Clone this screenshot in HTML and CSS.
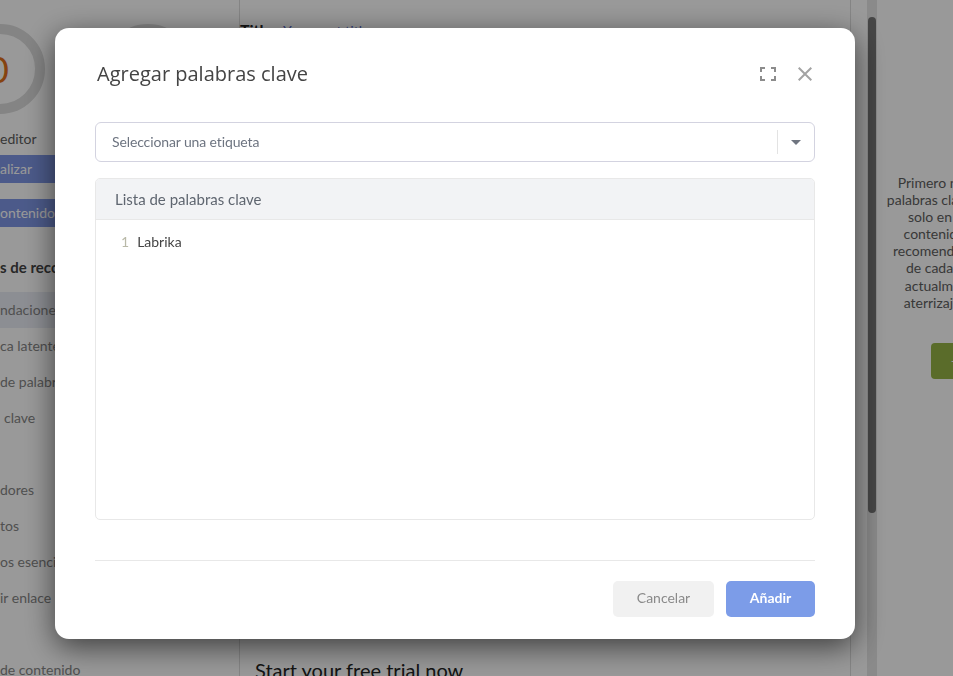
FILE: index.html
```html
<!DOCTYPE html>
<html lang="es">
<head>
<meta charset="utf-8">
<title>Agregar palabras clave</title>
<link rel="stylesheet" href="styles.css">
</head>
<body>
<div class="page">
  <aside class="sidebar">
    <div class="scores">
      <div class="ring"><span class="ring-value">0</span></div>
      <div class="ring"></div>
    </div>
    <div class="editor-link">editor</div>
    <div class="side-btn">alizar</div>
    <div class="side-btn side-btn-second">ontenido d</div>
    <div class="side-heading">s de reco</div>
    <div class="side-item side-item-active">ndaciones</div>
    <div class="side-item">ca latente</div>
    <div class="side-item">de palabr</div>
    <div class="side-item side-item-inset">clave</div>
    <div class="side-item side-gap">dores</div>
    <div class="side-item">tos</div>
    <div class="side-item">os esenci</div>
    <div class="side-item">ir enlace</div>
    <div class="side-item side-gap">de contenido</div>
  </aside>
  <main class="main">
    <div class="title-row"><b class="title-label">Title</b><span class="title-value">Your next title</span></div>
    <h2 class="trial">Start your free trial now</h2>
  </main>
  <div class="scrollbar"><div class="thumb"></div></div>
  <aside class="promo">
    <p class="promo-text">Primero necesitas<br>palabras clave para el<br>solo en el sitio<br>contenido de tu<br>recomendaciones y<br>de cada una de<br>actualmente en<br>aterrizaje web y</p>
    <div class="promo-btn">+ Añadir</div>
  </aside>
</div>
<div class="overlay">
  <section class="modal">
    <header class="modal-head">
      <h1 class="modal-title">Agregar palabras clave</h1>
      <div class="modal-icons">
        <svg class="icon" width="16" height="14" viewBox="0 0 16 14" fill="none" stroke="#8c8c8c" stroke-width="2"><path d="M1 5V1h4M11 1h4v4M15 9v4h-4M5 13H1V9"/></svg>
        <svg class="icon" width="14" height="14" viewBox="0 0 14 14" fill="none" stroke="#a3a3a3" stroke-width="2"><path d="M0.7 0.7l12.6 12.6M13.3 0.7L0.7 13.3"/></svg>
      </div>
    </header>
    <div class="select">
      <span class="select-label">Seleccionar una etiqueta</span>
      <span class="select-sep"></span>
      <span class="select-arrow"></span>
    </div>
    <div class="panel">
      <div class="panel-head">Lista de palabras clave</div>
      <div class="panel-body"><span class="line-no">1</span><span class="line-text">Labrika</span></div>
    </div>
    <footer class="modal-foot">
      <button class="btn btn-cancel">Cancelar</button>
      <button class="btn btn-add">Añadir</button>
    </footer>
  </section>
</div>
</body>
</html>
```
FILE: styles.css
```css
* { box-sizing: border-box; }
html, body { margin: 0; height: 100%; overflow: hidden; }
body { font-family: "Lato", "Liberation Sans", sans-serif; font-size: 14px; color: #333; background: #fff; }

.page { display: flex; width: 1120px; height: 676px; }

.sidebar { width: 240px; flex: none; padding-top: 24px; border-right: 1px solid #ddd; }
.scores { display: flex; gap: 58px; margin-left: -45px; height: 90px; }
.ring { width: 90px; height: 90px; border: 10px solid #dcdcdc; border-radius: 50%; display: flex; align-items: center; justify-content: center; flex: none; }
.ring-value { font-size: 36px; color: #e0701c; margin-right: 3px; }
.editor-link { margin-top: 16px; height: 25px; line-height: 17px; color: #5c5c5c; }
.side-btn { height: 28px; line-height: 27px; background: #7f97e6; color: #fff; white-space: nowrap; overflow: hidden; }
.side-btn-second { margin-top: 16px; }
.side-heading { margin-top: 30px; font-weight: 700; font-size: 15px; height: 20px; line-height: 20px; color: #444; white-space: nowrap; }
.side-item { height: 36px; line-height: 35px; white-space: nowrap; color: #858585; }
.side-item-active { margin-top: 15px; background: #eaedf5; }
.side-item-inset { padding-left: 4px; }
.side-gap { margin-top: 36px; }

.main { width: 611px; flex: none; border-right: 1px solid #ddd; display: flex; flex-direction: column; justify-content: space-between; }
.title-row { padding-top: 20px; display: flex; align-items: baseline; gap: 11px; font-size: 16px; }
.title-label { color: #222; }
.title-value { color: #5266c8; font-size: 14px; }
.trial { margin: 0 0 -6px 15px; font-weight: 400; font-size: 20px; line-height: 24px; color: #222; }

.scrollbar { width: 10px; flex: none; margin-left: 16px; background: #e6e6e6; padding: 17px 1px 0; }
.thumb { height: 496px; border-radius: 4px; background: #757575; }

.promo { width: 150px; flex: none; padding-top: 174px; text-align: center; }
.promo-text { margin: 0; line-height: 17.1px; color: #5e5e5e; white-space: nowrap; }
.promo-btn { margin: 32px 0 0 54px; width: 120px; height: 36px; line-height: 35px; padding-left: 20px; white-space: nowrap; text-align: left; background: #96b546; border-radius: 4px; color: #fff; }

.overlay { position: fixed; inset: 0; background: rgba(0, 0, 0, .4); padding: 28px 0 0 55px; }
.modal { width: 800px; height: 611px; background: #fff; border-radius: 14px; padding: 0 40px; box-shadow: 0 8px 30px rgba(0, 0, 0, .6); display: flex; flex-direction: column; }

.modal-head { height: 94px; display: flex; align-items: center; justify-content: space-between; padding: 0 3px 0 2px; }
.modal-title { margin: 0 0 4px; font-family: "Open Sans", sans-serif; font-size: 20px; font-weight: 400; color: #444; }
.modal-icons { display: flex; gap: 22px; align-items: center; margin-bottom: 2px; }
.icon { display: block; }

.select { height: 40px; border: 1px solid #d3d3e0; border-radius: 6px; display: flex; align-items: center; padding: 0 13px 0 16px; flex: none; }
.select-label { flex: 1; color: #6d7480; letter-spacing: -.12px; padding-bottom: 2px; }
.select-sep { width: 1px; height: 24px; background: #e3e3e3; margin-right: 13px; }
.select-arrow { width: 0; height: 0; border-left: 5px solid transparent; border-right: 5px solid transparent; border-top: 5px solid #6f7580; }

.panel { margin-top: 16px; height: 342px; border: 1px solid #e8e8e8; border-radius: 5px; overflow: hidden; flex: none; }
.panel-head { height: 41px; line-height: 40px; padding-left: 19px; background: #f2f3f5; border-bottom: 1px solid #e8e8e8; color: #5f6670; font-size: 15px; }
.panel-body { padding: 14px 0 0 25px; display: flex; gap: 8px; line-height: 16px; }
.line-no { color: #b9b9a8; }
.line-text { color: #444; }

.modal-foot { margin-top: 40px; border-top: 1px solid #e8e8e8; padding-top: 20px; display: flex; justify-content: flex-end; gap: 12px; }
.btn { height: 36px; border: 0; border-radius: 5px; font: inherit; padding: 0 0 3px; }
.btn-cancel { width: 101px; background: #f1f1f1; color: #8a8a8a; }
.btn-add { width: 89px; background: #7c9ce8; color: #fff; font-weight: 700; }
```
